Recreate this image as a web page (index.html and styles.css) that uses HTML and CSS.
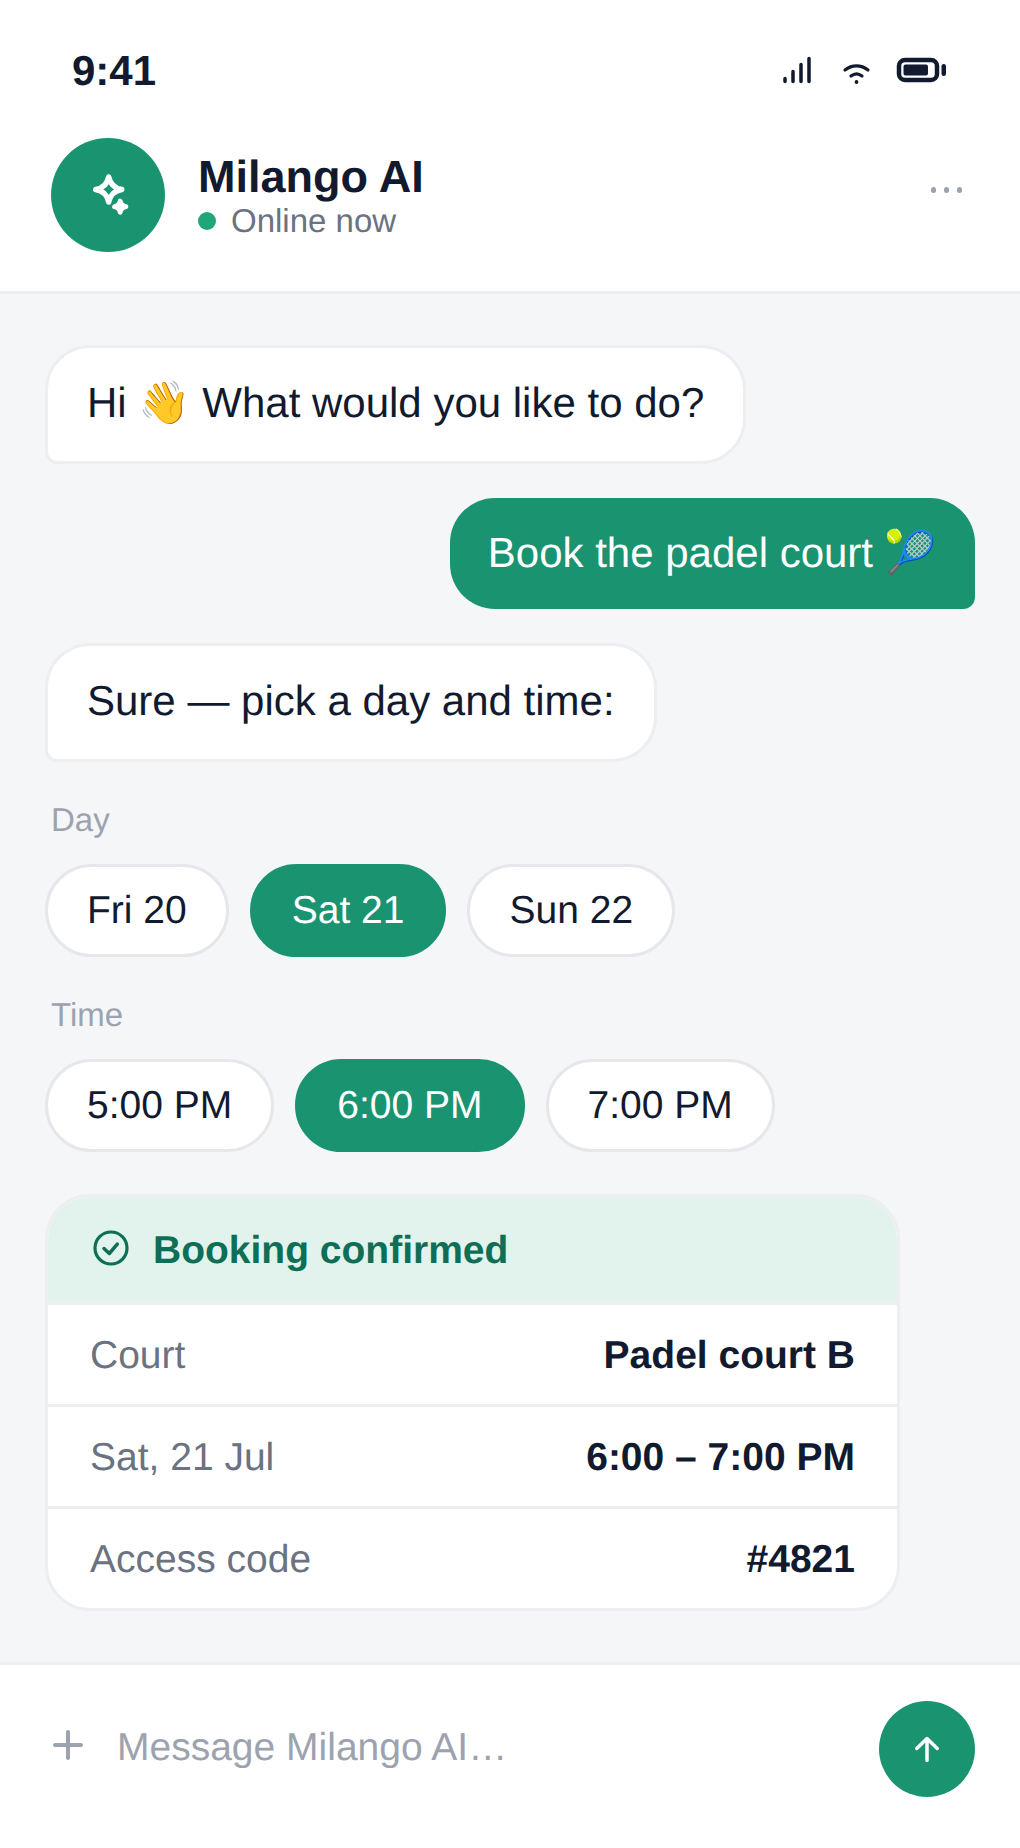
FILE: index.html
```html
<!DOCTYPE html>
<html lang="en">
<head>
  <meta charset="UTF-8" />
  <meta name="viewport" content="width=device-width, initial-scale=1.0"/>
  <title>Milango AI</title>
  <link rel="stylesheet" href="styles.css">
</head>
<body>
  <div class="app">
    <div class="status-bar">
      <span class="clock">9:41</span>
      <svg class="status-icons" width="164" height="30" viewBox="783 56 164 30" fill="none" stroke="#111a2e" stroke-linecap="round">
        <path d="M785 81.500v-3M793 81.500v-10M801 81.500v-17M809 81.500v-23" stroke-width="3.500"/>
        <path d="M845 70c7-5.500 16-5.500 23 0" stroke-width="3.200"/>
        <path d="M851 76c3.500-2.800 7.500-2.800 11 0" stroke-width="3.200"/>
        <circle cx="856.500" cy="82" r="1.900" fill="#111a2e" stroke="none"/>
        <rect x="899" y="60" width="38" height="20" rx="6" stroke-width="4.500"/>
        <rect x="903.500" y="64.500" width="24.500" height="11" rx="2" fill="#111a2e" stroke="none"/>
        <rect x="941.500" y="64" width="4.500" height="12" rx="2.200" fill="#111a2e" stroke="none"/>
      </svg>
    </div>

    <header class="chat-header">
      <div class="avatar">
        <svg width="114" height="114" viewBox="0 0 114 114" fill="none" stroke="#fff" stroke-width="5.500" stroke-linejoin="round">
          <path d="M57.700 39c1.200 6 4 11 13 12.500-9 1.500-11.800 6.500-13 12.500-1.200-6-4-11-13-12.500 9-1.500 11.800-6.500 13-12.500z"/>
          <path d="M69.200 63c.6 3 2 5 5.700 5.700-3.700.7-5.100 2.700-5.700 5.700-.6-3-2-5-5.700-5.700 3.700-.7 5.100-2.700 5.700-5.700z" stroke-width="4.800"/>
        </svg>
      </div>
      <div class="chat-title">
        <div class="chat-name">Milango AI</div>
        <div class="chat-state"><span class="online-dot"></span>Online now</div>
      </div>
      <div class="more-dots"><span></span><span></span><span></span></div>
    </header>

    <main class="messages">
      <div class="bubble bubble-bot">Hi 👋 What would you like to do?</div>
      <div class="bubble bubble-user">Book the padel court 🎾</div>
      <div class="bubble bubble-bot">Sure — pick a day and time:</div>

      <div class="picker-label">Day</div>
      <div class="chips">
        <div class="chip">Fri 20</div>
        <div class="chip chip-active">Sat 21</div>
        <div class="chip">Sun 22</div>
      </div>

      <div class="picker-label">Time</div>
      <div class="chips">
        <div class="chip">5:00 PM</div>
        <div class="chip chip-active">6:00 PM</div>
        <div class="chip">7:00 PM</div>
      </div>

      <div class="booking-card">
        <div class="booking-head">
          <svg class="check-icon" width="36" height="36" viewBox="0 0 36 36" fill="none" stroke="#0f6e56" stroke-width="3.200" stroke-linecap="round" stroke-linejoin="round">
            <circle cx="18" cy="18" r="16"/>
            <path d="M11 18.500l5.300 5 8-9.300" stroke-width="3.500"/>
          </svg>
          <span>Booking confirmed</span>
        </div>
        <div class="booking-row"><span class="row-label">Court</span><span class="row-value">Padel court B</span></div>
        <div class="booking-row"><span class="row-label">Sat, 21 Jul</span><span class="row-value">6:00 – 7:00 PM</span></div>
        <div class="booking-row"><span class="row-label">Access code</span><span class="row-value">#4821</span></div>
      </div>
    </main>

    <footer class="composer">
      <svg class="plus-icon" width="32" height="32" viewBox="0 0 32 32" fill="none" stroke="#9ca3af" stroke-width="4" stroke-linecap="round">
        <path d="M16 3v26M3 16h26"/>
      </svg>
      <div class="composer-input">Message Milango AI…</div>
      <div class="send-btn">
        <svg width="30" height="30" viewBox="0 0 30 30" fill="none" stroke="#fff" stroke-width="3.500" stroke-linecap="round" stroke-linejoin="round">
          <path d="M15 26.500V4.500M4.750 14.500 15 4.500l10.250 10"/>
        </svg>
      </div>
    </footer>
  </div>
</body>
</html>
```

FILE: styles.css
```css
* {
  margin: 0;
  padding: 0;
  box-sizing: border-box;
  font-family: 'Liberation Sans', Arial, sans-serif;
  text-rendering: geometricPrecision;
}

body {
  background: #fff;
  color: #111a2e;
}

.app {
  width: 1020px;
  height: 1848px;
  display: flex;
  flex-direction: column;
  overflow: hidden;
}

.status-bar {
  height: 138px;
  padding: 0 73px 0 72px;
  display: flex;
  justify-content: space-between;
  align-items: flex-start;
}

.clock {
  margin-top: 45px;
  font-size: 42px;
  line-height: 52px;
  font-weight: 700;
}

.status-icons {
  margin-top: 56px;
}

.chat-header {
  height: 156px;
  padding: 0 51px 39px;
  border-bottom: 3px solid #eceef2;
  display: flex;
  align-items: flex-start;
}

.avatar {
  width: 114px;
  height: 114px;
  border-radius: 50%;
  background: #1a9370;
  flex-shrink: 0;
}

.avatar svg {
  display: block;
}

.chat-title {
  margin-left: 33px;
  margin-top: 12px;
  flex: 1;
}

.chat-name {
  font-size: 45px;
  line-height: 54px;
  font-weight: 700;
}

.chat-state {
  margin-top: -2px;
  font-size: 33px;
  line-height: 38px;
  color: #6b7280;
  display: flex;
  align-items: center;
}

.online-dot {
  width: 18px;
  height: 18px;
  border-radius: 50%;
  background: #1fa67a;
  margin-right: 15px;
}

.more-dots {
  display: flex;
  gap: 7.500px;
  margin-top: 49px;
  margin-right: 7px;
}

.more-dots span {
  width: 5.500px;
  height: 5.500px;
  border-radius: 50%;
  background: #9ca3af;
}

.messages {
  flex: 1;
  background: #f5f6f8;
  padding: 51px 45px 0;
  display: flex;
  flex-direction: column;
  align-items: flex-start;
}

.bubble {
  font-size: 42px;
  line-height: 59px;
  margin-bottom: 34px;
}

.bubble-bot {
  background: #fff;
  border: 3px solid #eceef2;
  border-radius: 45px 45px 45px 12px;
  padding: 25px 39px 29px;
}

.bubble-user {
  align-self: flex-end;
  background: #1a9370;
  color: #fff;
  border-radius: 45px 45px 12px 45px;
  padding: 25px 38px 27px;
}

.picker-label {
  font-size: 33px;
  line-height: 38px;
  color: #9ca3af;
  margin: 39px 0 25px 6px;
}

.bubble + .picker-label {
  margin-top: 5px;
}

.chips {
  display: flex;
  gap: 21px;
}

.chip {
  height: 93px;
  padding: 0 39px;
  border: 3px solid #e5e7eb;
  border-radius: 47px;
  background: #fff;
  font-size: 39px;
  line-height: 87px;
}

.chip-active {
  background: #1a9370;
  border-color: #1a9370;
  color: #fff;
}

.booking-card {
  width: 855px;
  margin-top: 42px;
  background: #fff;
  border: 3px solid #eceef2;
  border-radius: 45px;
  overflow: hidden;
}

.booking-head {
  height: 108px;
  padding: 2px 42px 0 45px;
  background: #e1f3ec;
  border-bottom: 3px solid #eceef2;
  display: flex;
  align-items: center;
  gap: 24px;
  color: #0f6e56;
  font-size: 39px;
  font-weight: 700;
}

.check-icon {
  margin-top: -5px;
}

.booking-row {
  height: 102px;
  padding: 2px 42px 0;
  border-bottom: 3px solid #eceef2;
  display: flex;
  justify-content: space-between;
  align-items: center;
  font-size: 39px;
}

.booking-row:last-child {
  border-bottom: none;
  height: 99px;
}

.row-label {
  color: #6b7280;
}

.row-value {
  font-weight: 700;
}

.composer {
  height: 186px;
  flex-shrink: 0;
  padding: 36px 45px 0 52px;
  border-top: 3px solid #eceef2;
  display: flex;
  align-items: flex-start;
}

.plus-icon {
  margin-top: 28px;
  margin-right: 33px;
  flex-shrink: 0;
}

.composer-input {
  flex: 1;
  margin-top: 24px;
  font-size: 39px;
  line-height: 46px;
  color: #9ca3af;
}

.send-btn {
  width: 96px;
  height: 96px;
  border-radius: 50%;
  background: #1a9370;
  display: flex;
  align-items: center;
  justify-content: center;
}
```
